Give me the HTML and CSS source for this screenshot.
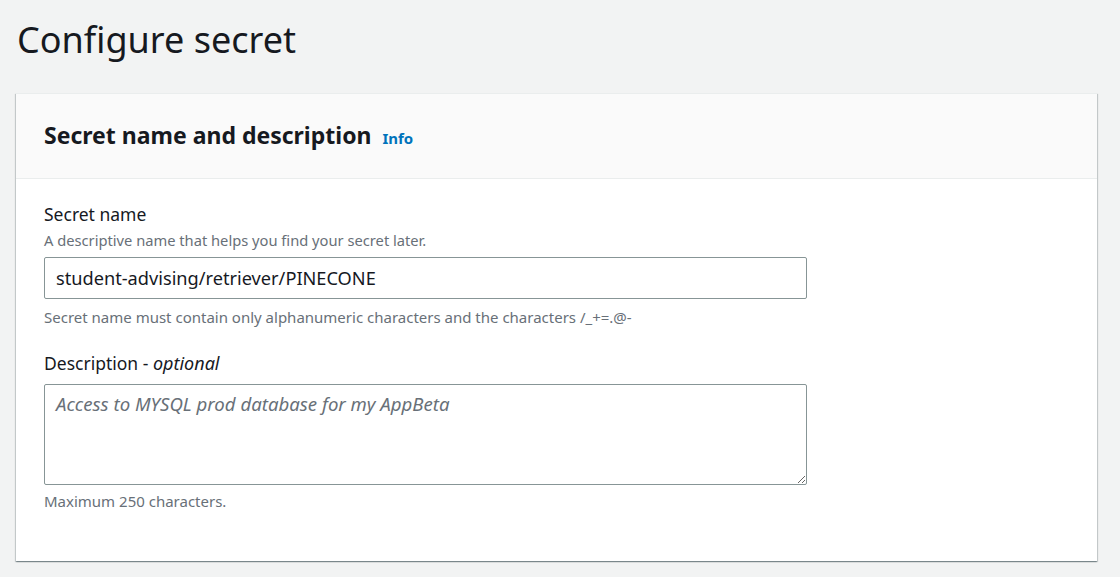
FILE: index.html
```html
<!DOCTYPE html>
<html lang="en">
<head>
<meta charset="utf-8">
<title>Configure secret</title>
<link rel="stylesheet" href="styles.css">
</head>
<body>
<main class="page">
  <h1 class="page-title">Configure secret</h1>
  <section class="card">
    <header class="card-header">
      <h2 class="card-title">Secret name and description</h2>
      <a class="info-link" href="#">Info</a>
    </header>
    <div class="card-body">
      <div class="field">
        <label class="field-label" for="secret-name">Secret name</label>
        <div class="field-desc">A descriptive name that helps you find your secret later.</div>
        <input id="secret-name" class="text-input" type="text" value="student-advising/retriever/PINECONE">
        <div class="field-constraint">Secret name must contain only alphanumeric characters and the characters /_+=.@-</div>
      </div>
      <div class="field field-second">
        <label class="field-label" for="secret-desc">Description - <i>optional</i></label>
        <textarea id="secret-desc" class="text-area" placeholder="Access to MYSQL prod database for my AppBeta"></textarea>
        <div class="field-constraint field-constraint-last">Maximum 250 characters.</div>
      </div>
    </div>
  </section>
</main>
</body>
</html>
```

FILE: styles.css
```css
html, body {
  margin: 0;
  padding: 0;
  background: #f2f3f3;
}
body {
  font-family: "Noto Sans", "Open Sans", sans-serif;
  color: #16191f;
}
.page {
  padding: 16px 23px 16px 16px;
}
.page-title {
  margin: 0 0 29px 1px;
  font-size: 36px;
  font-weight: 400;
  line-height: 48px;
  color: #16191f;
}
.card {
  background: #fff;
  box-shadow: 0 1px 1px 0 rgba(0, 28, 36, 0.3), 1px 1px 1px 0 rgba(0, 28, 36, 0.15), -1px 1px 1px 0 rgba(0, 28, 36, 0.15);
  border-top: 1px solid #eaeded;
}
.card-header {
  display: flex;
  align-items: baseline;
  gap: 11px;
  background: #fafafa;
  border-bottom: 1px solid #eaeded;
  padding: 24px 28px 26px;
}
.card-title {
  margin: 0;
  font-size: 23px;
  font-weight: 700;
  line-height: 34px;
}
.info-link {
  font-size: 15px;
  font-weight: 700;
  color: #0073bb;
  text-decoration: none;
}
.card-body {
  padding: 23px 28px 49px;
}
.field {
  display: flex;
  flex-direction: column;
}
.field-second {
  margin-top: 23px;
}
.field-label {
  font-size: 17.5px;
  line-height: 24px;
  color: #16191f;
}
.field-label i {
  font-size: 18px;
}
.field-desc {
  margin-top: 3px;
  font-size: 14.7px;
  line-height: 22px;
  color: #687078;
}
.text-input, .text-area {
  box-sizing: border-box;
  width: 763px;
  border: 1px solid #879596;
  border-radius: 2px;
  padding: 0 11px;
  font-family: "Noto Sans", "Open Sans", sans-serif;
  font-size: 18.2px;
  color: #16191f;
  background: #fff;
  outline: none;
}
.text-input {
  height: 42px;
  margin-top: 6px;
}
.text-area {
  height: 101px;
  margin-top: 9px;
  padding-top: 8px;
  line-height: 22px;
  font-size: 18.6px;
  resize: vertical;
}
.text-area::placeholder {
  font-style: italic;
  color: #687078;
}
.field-constraint {
  margin-top: 7px;
  font-size: 15px;
  line-height: 22px;
  color: #687078;
}
.field-constraint-last {
  margin-top: 5px;
}
```
